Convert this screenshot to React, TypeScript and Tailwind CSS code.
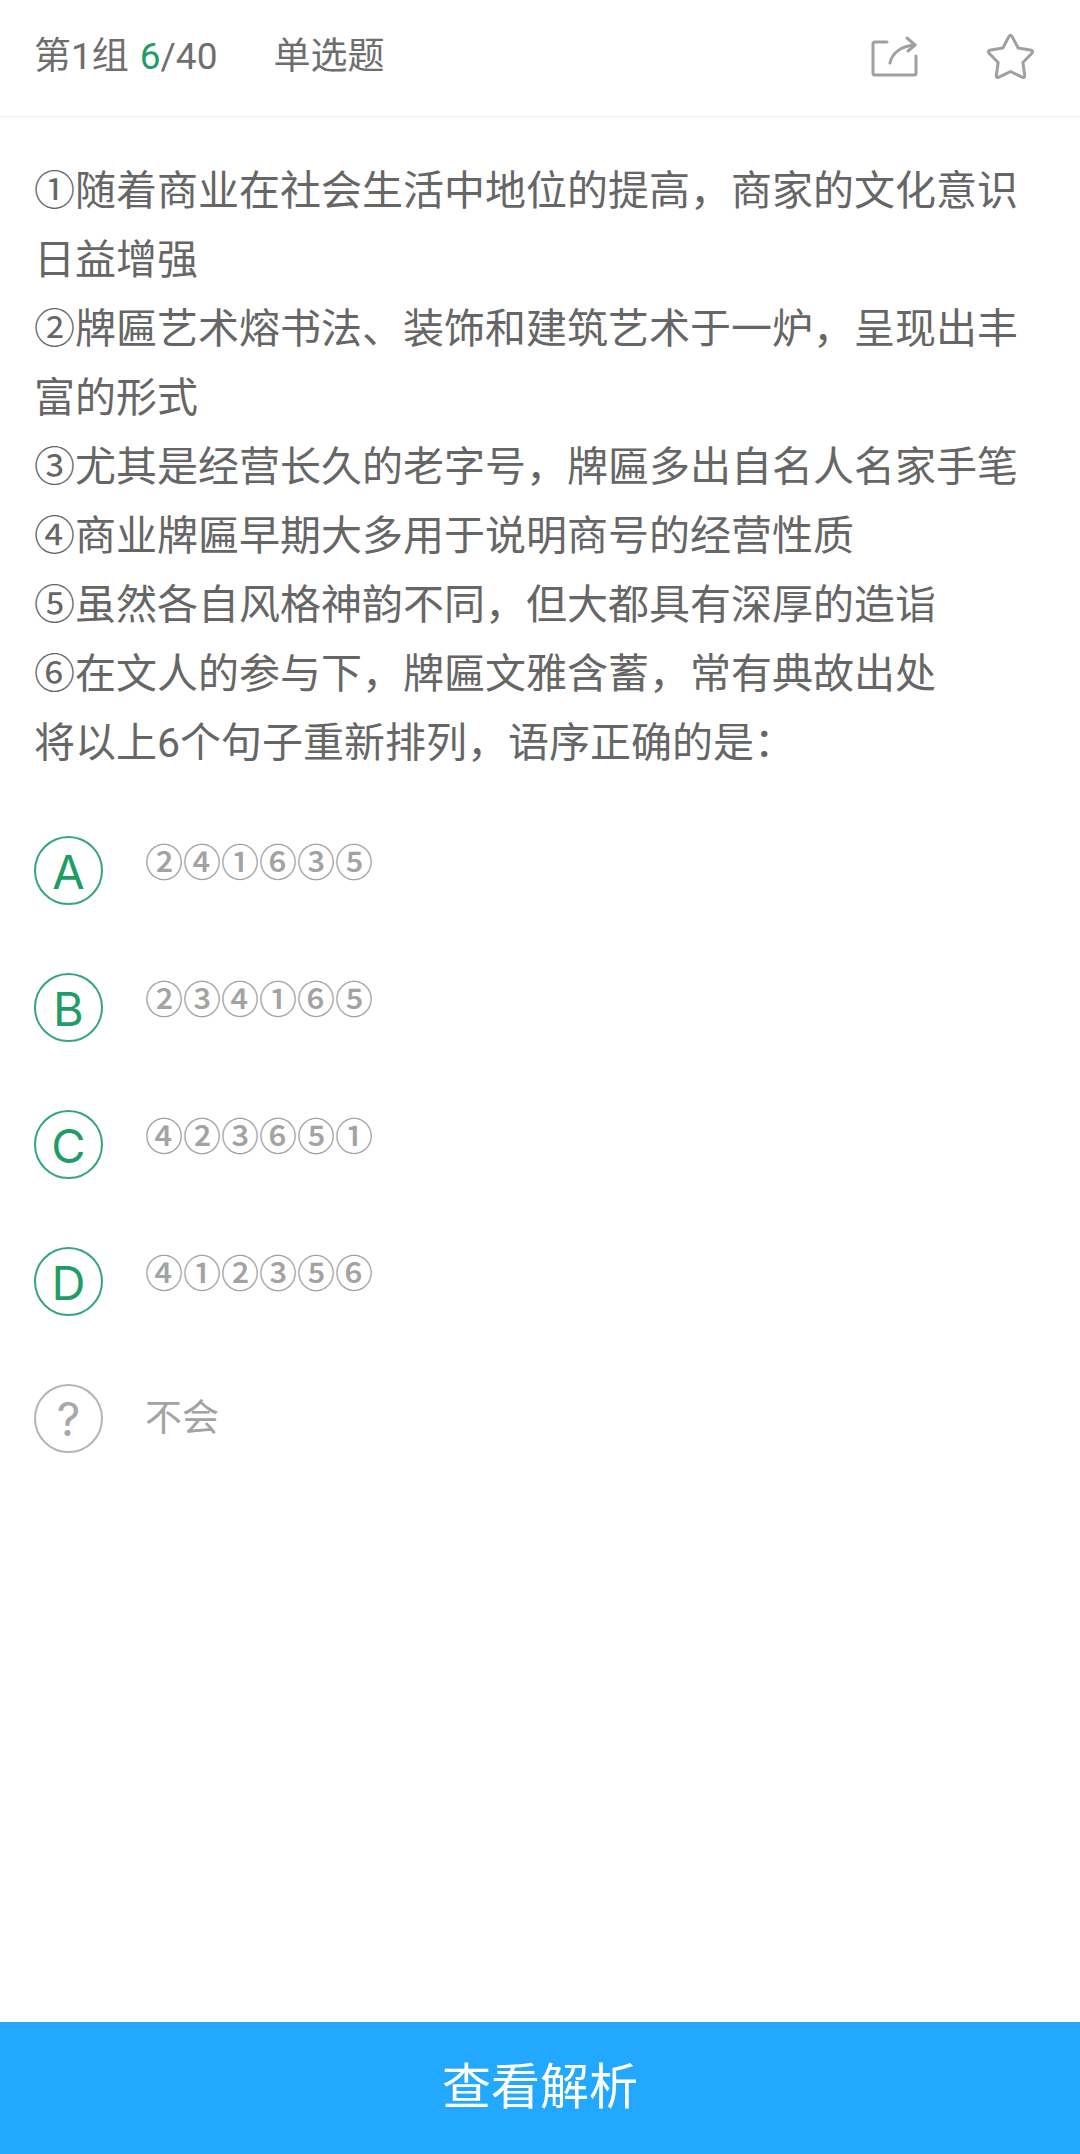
const FONT = "font-['Roboto','Noto_Sans_CJK_SC',sans-serif]";

const lines = [
  "①随着商业在社会生活中地位的提高，商家的文化意识",
  "日益增强",
  "②牌匾艺术熔书法、装饰和建筑艺术于一炉，呈现出丰",
  "富的形式",
  "③尤其是经营长久的老字号，牌匾多出自名人名家手笔",
  "④商业牌匾早期大多用于说明商号的经营性质",
  "⑤虽然各自风格神韵不同，但大都具有深厚的造诣",
  "⑥在文人的参与下，牌匾文雅含蓄，常有典故出处",
  "将以上6个句子重新排列，语序正确的是：",
];

const options = [
  { key: "A", text: "②④①⑥③⑤" },
  { key: "B", text: "②③④①⑥⑤" },
  { key: "C", text: "④②③⑥⑤①" },
  { key: "D", text: "④①②③⑤⑥" },
];

function starPath() {
  const cx = 24.5, cy = 26.5, R = 25, r = 13;
  const pts: [number, number][] = [];
  for (let i = 0; i < 10; i++) {
    const a = -Math.PI / 2 + (i * Math.PI) / 5;
    const rad = i % 2 === 0 ? R : r;
    pts.push([cx + rad * Math.cos(a), cy + rad * Math.sin(a)]);
  }
  const lerp = (p: [number, number], q: [number, number], t: number) =>
    `${(p[0] + (q[0] - p[0]) * t).toFixed(2)} ${(p[1] + (q[1] - p[1]) * t).toFixed(2)}`;
  let d = "";
  for (let i = 0; i < 10; i += 2) {
    const o = pts[i], prev = pts[(i + 9) % 10], next = pts[(i + 1) % 10];
    d += `${i === 0 ? "M" : "L"}${lerp(o, prev, 0.25)} Q${o[0].toFixed(2)} ${o[1].toFixed(2)} ${lerp(o, next, 0.25)} L${next[0].toFixed(2)} ${next[1].toFixed(2)} `;
  }
  return d + "Z";
}

function ShareIcon() {
  return (
    <svg width="48" height="48" viewBox="0 0 48 48" fill="none" stroke="#a0a0a0" strokeWidth="3" strokeLinecap="round" strokeLinejoin="round">
      <path d="M17 9 H5 a2 2 0 0 0 -2 2 V40 a2 2 0 0 0 2 2 H44 a2 2 0 0 0 2 -2 V23" />
      <path d="M20 30 C22 20 31 13 45 12" />
      <path d="M37 5 L45 12 L38 18" />
    </svg>
  );
}

function StarIcon() {
  return (
    <svg width="50" height="50" viewBox="0 0 50 50" fill="none" stroke="#a0a0a0" strokeWidth="3" strokeLinejoin="round">
      <path d={starPath()} />
    </svg>
  );
}

export default function App() {
  return (
    <div className={`${FONT} flex h-[2154px] w-[1080px] flex-col overflow-hidden bg-white`}>
      <header className="flex h-[117px] shrink-0 items-center border-b border-[#eeeeee] pb-[3px] pl-[34px] pr-[44px] text-[37px] text-[#6e6e6e]">
        <span>第1组</span>
        <span className="ml-[11px] text-[#1f9d68]">6</span>
        <span>/40</span>
        <span className="ml-[56px]">单选题</span>
        <div className="ml-auto flex items-center gap-[68px]">
          <ShareIcon />
          <StarIcon />
        </div>
      </header>

      <main className="flex-1 px-[34px] pt-[40px]">
        <div className="text-[41px] leading-[69px] text-[#666666]">
          {lines.map((l) => (
            <div key={l} className="whitespace-nowrap">{l}</div>
          ))}
        </div>

        <div className="mt-[24px]">
          {options.map((o) => (
            <div key={o.key} className="flex h-[137px] items-center">
              <div className="flex h-[69px] w-[69px] shrink-0 items-center justify-center rounded-full border-2 border-[#35a67c] pt-[2px] font-['Inter',sans-serif] text-[47px] leading-none text-[#1f9d68]">
                {o.key}
              </div>
              <div className="mb-[16px] ml-[42px] text-[38px] font-medium leading-none text-[#a3a3a3]">{o.text}</div>
            </div>
          ))}
          <div className="flex h-[137px] items-center">
            <div className="flex h-[69px] w-[69px] shrink-0 items-center justify-center rounded-full border-2 border-[#b5b5b5] font-['Inter',sans-serif] text-[46px] leading-none text-[#a8a8a8]">
              ?
            </div>
            <div className="ml-[42px] text-[37px] leading-none text-[#a3a3a3]">不会</div>
          </div>
        </div>
      </main>

      <button className="flex h-[132px] shrink-0 items-center justify-center bg-[#22a8ff] text-[49px] text-white">
        查看解析
      </button>
    </div>
  );
}
